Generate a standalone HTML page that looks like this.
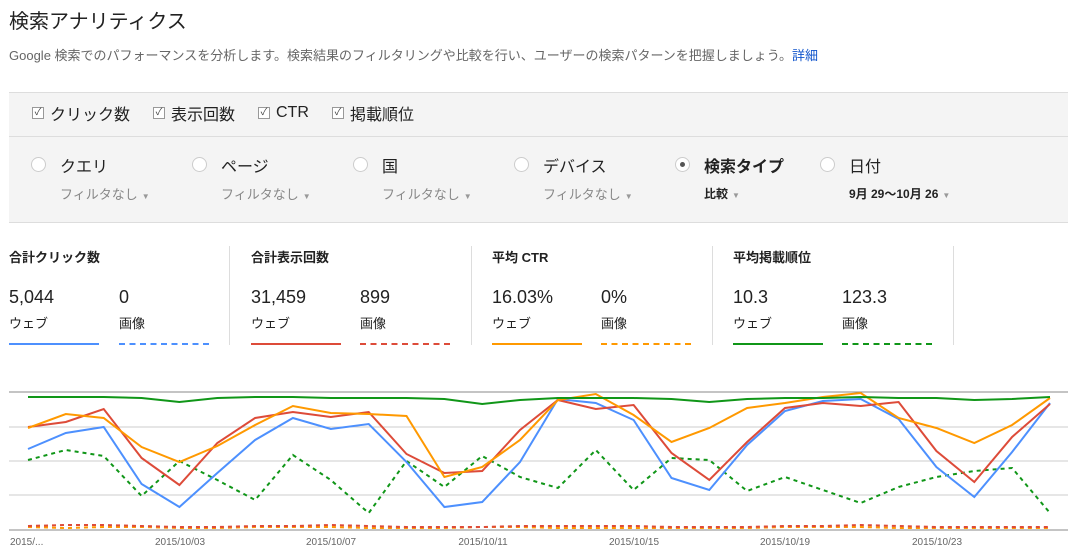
<!DOCTYPE html>
<html><head><meta charset="utf-8"><style>
*{margin:0;padding:0;box-sizing:border-box}
body{width:1078px;height:549px;background:#fff;font-family:"Liberation Sans","Noto Sans CJK JP",sans-serif;color:#222;position:relative;overflow:hidden}
.a{position:absolute;white-space:nowrap}
h1{position:absolute;left:9px;top:5px;font-size:20px;font-weight:normal;color:#222}
.desc{left:9px;top:45px;font-size:13px;color:#666}
.desc span{color:#15c}
.panel{position:absolute;left:9px;top:92px;width:1059px;height:131px;background:#f4f4f4;border-top:1px solid #ddd;border-bottom:1px solid #ddd}
.sep{position:absolute;left:9px;top:136px;width:1059px;height:1px;background:#ddd}
.cb{font-size:16px;top:102px;display:flex;align-items:center;height:22px}
.cb i{display:inline-block;width:12px;height:12px;border:1px solid #999;background:#fff;font-style:normal;font-size:10px;line-height:10px;text-align:center;color:#444;margin-right:6px}
.rad{width:15px;height:15px;border-radius:50%;border:1px solid #ccc;background:#fff;top:157px}
.rl{font-size:16px;top:153px}
.fl{font-size:13px;top:184px;color:#888}
.fl b{font-weight:normal;font-size:8px;color:#999;margin-left:4px}
.mt{font-size:13px;font-weight:bold;top:247px}
.mv{font-size:18px;top:287px}
.ml{font-size:13px;top:313px}
.vd{width:1px;height:99px;background:#ddd;top:246px}
.sl{height:2px;top:343px;width:90px}
</style></head><body>
<h1>検索アナリティクス</h1>
<div class="a desc">Google 検索でのパフォーマンスを分析します。検索結果のフィルタリングや比較を行い、ユーザーの検索パターンを把握しましょう。<span>詳細</span></div>
<div class="panel"></div><div class="sep"></div>
<div class="a cb" style="left:32px"><i>✓</i>クリック数</div>
<div class="a cb" style="left:153px"><i>✓</i>表示回数</div>
<div class="a cb" style="left:258px"><i>✓</i>CTR</div>
<div class="a cb" style="left:332px"><i>✓</i>掲載順位</div>

<div class="a rad" style="left:31px"></div><div class="a rl" style="left:60px">クエリ</div><div class="a fl" style="left:60px">フィルタなし<b>▼</b></div>
<div class="a rad" style="left:192px"></div><div class="a rl" style="left:221px">ページ</div><div class="a fl" style="left:221px">フィルタなし<b>▼</b></div>
<div class="a rad" style="left:353px"></div><div class="a rl" style="left:382px">国</div><div class="a fl" style="left:382px">フィルタなし<b>▼</b></div>
<div class="a rad" style="left:514px"></div><div class="a rl" style="left:543px">デバイス</div><div class="a fl" style="left:543px">フィルタなし<b>▼</b></div>
<div class="a rad" style="left:675px"><div style="position:absolute;left:4px;top:4px;width:5px;height:5px;border-radius:50%;background:#555"></div></div><div class="a rl" style="left:704px;font-weight:bold">検索タイプ</div><div class="a fl" style="left:704px;color:#222;font-weight:bold;font-size:12px;top:185px">比較<b>▼</b></div>
<div class="a rad" style="left:820px"></div><div class="a rl" style="left:849px">日付</div><div class="a fl" style="left:849px;color:#222;font-weight:bold;font-size:12px;top:185px">9月 29〜10月 26<b>▼</b></div>

<div class="a mt" style="left:9px">合計クリック数</div>
<div class="a mv" style="left:9px">5,044</div><div class="a mv" style="left:119px">0</div>
<div class="a ml" style="left:9px">ウェブ</div><div class="a ml" style="left:119px">画像</div>
<div class="a sl" style="left:9px;background:#4d90fe"></div><div class="a sl" style="left:119px;border-top:2px dashed #4d90fe"></div>
<div class="a vd" style="left:229px"></div>
<div class="a mt" style="left:251px">合計表示回数</div>
<div class="a mv" style="left:251px">31,459</div><div class="a mv" style="left:360px">899</div>
<div class="a ml" style="left:251px">ウェブ</div><div class="a ml" style="left:360px">画像</div>
<div class="a sl" style="left:251px;background:#dd4b39"></div><div class="a sl" style="left:360px;border-top:2px dashed #dd4b39"></div>
<div class="a vd" style="left:471px"></div>
<div class="a mt" style="left:492px">平均 CTR</div>
<div class="a mv" style="left:492px">16.03%</div><div class="a mv" style="left:601px">0%</div>
<div class="a ml" style="left:492px">ウェブ</div><div class="a ml" style="left:601px">画像</div>
<div class="a sl" style="left:492px;background:#ff9900"></div><div class="a sl" style="left:601px;border-top:2px dashed #ff9900"></div>
<div class="a vd" style="left:712px"></div>
<div class="a mt" style="left:733px">平均掲載順位</div>
<div class="a mv" style="left:733px">10.3</div><div class="a mv" style="left:842px">123.3</div>
<div class="a ml" style="left:733px">ウェブ</div><div class="a ml" style="left:842px">画像</div>
<div class="a sl" style="left:733px;background:#109618"></div><div class="a sl" style="left:842px;border-top:2px dashed #109618"></div>
<div class="a vd" style="left:953px"></div>

<svg class="a" style="left:0;top:0" width="1078" height="549" id="ch">
<line x1="9" y1="392" x2="1068" y2="392" stroke="#888"/>
<line x1="9" y1="427" x2="1068" y2="427" stroke="#ccc"/>
<line x1="9" y1="461" x2="1068" y2="461" stroke="#ccc"/>
<line x1="9" y1="495" x2="1068" y2="495" stroke="#ccc"/>
<line x1="9" y1="530" x2="1068" y2="530" stroke="#888"/>
<text x="10" y="545" font-size="10" fill="#666" font-family="Liberation Sans">2015/...</text>
<g font-size="10" fill="#666" font-family="Liberation Sans" text-anchor="middle">
<text x="180" y="545">2015/10/03</text><text x="331" y="545">2015/10/07</text><text x="483" y="545">2015/10/11</text><text x="634" y="545">2015/10/15</text><text x="785" y="545">2015/10/19</text><text x="937" y="545">2015/10/23</text></g>
</svg>
<script>
var S={
g2:[[460,450,456,496,461,480,500,455,480,513,461,487,456,477,488,450,490,458,460,491,477,490,503,487,477,471,468,513],'#109618',1],
og:[[527,528,527,527,528,528,527,527,527,528,528,528,527,527,528,528,528,528,528,528,527,527,527,528,528,528,528,528],'#ff9900',1],
r2:[[526,525,525,526,527,527,526,526,525,526,527,527,527,526,526,526,526,527,527,527,526,526,525,526,527,527,527,527],'#dd4b39',1],
g:[[397,397,397,398,402,398,397,397,398,398,398,399,404,400,398,398,398,399,402,399,398,398,397,398,398,400,399,397],'#109618',0],
o:[[428,414,418,447,462,446,425,406,413,414,416,477,467,440,400,394,415,442,428,408,403,397,393,418,428,443,425,398],'#ff9900',0],
r:[[427,422,409,458,485,443,418,412,417,412,454,473,471,430,400,409,405,453,480,442,408,403,406,402,451,482,437,404],'#dd4b39',0],
b:[[449,433,427,484,507,473,440,418,429,424,462,507,502,462,399,403,420,478,490,445,411,401,399,419,467,497,452,403],'#4d90fe',0]};
var svg=document.getElementById('ch'),o=['g2','og','r2','b','r','o','g'];
o.forEach(function(k){var s=S[k],p=s[0].map(function(y,i){return (28+i*37.85).toFixed(1)+','+y}).join(' ');
var e=document.createElementNS('http://www.w3.org/2000/svg','polyline');e.setAttribute('points',p);e.setAttribute('fill','none');e.setAttribute('stroke',s[1]);e.setAttribute('stroke-width','2');if(s[2])e.setAttribute('stroke-dasharray','4,4');svg.appendChild(e);});
</script>
</body></html>
